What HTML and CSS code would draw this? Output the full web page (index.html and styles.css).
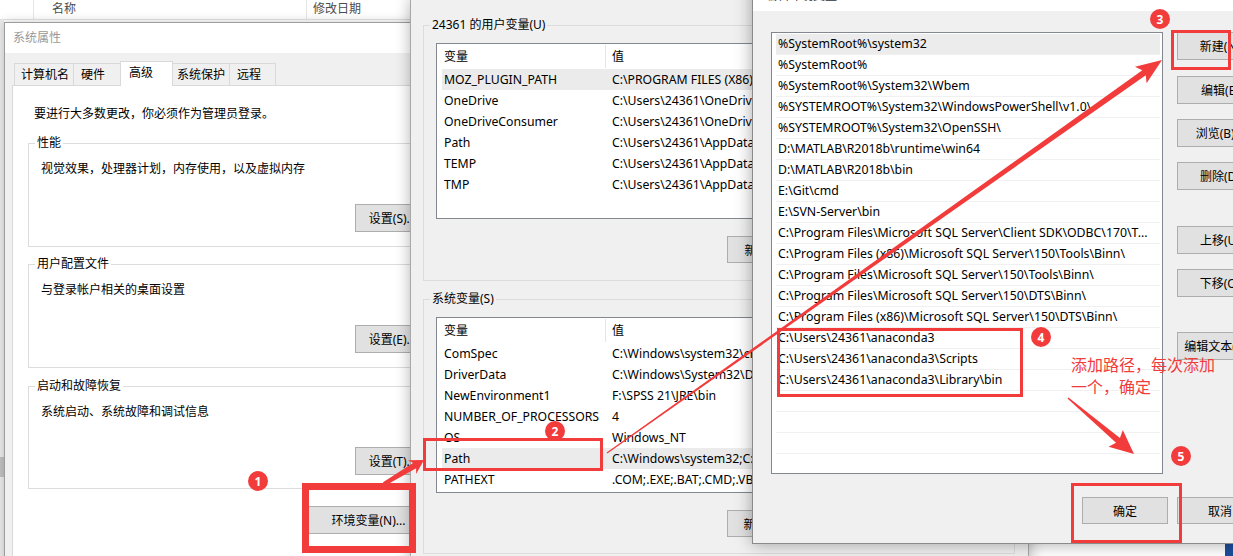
FILE: index.html
```html
<!DOCTYPE html>
<html>
<head>
  <meta charset="UTF-8">
  <title>编辑环境变量 - Path</title>
  <link rel="stylesheet" href="styles.css">
</head>
<body>
<div class="desktop">

  <div class="explorer">
    <div class="explorer-head">
      <span class="col-name">名称</span>
      <span class="col-date">修改日期</span>
    </div>
    <div class="explorer-body">
      <div class="explorer-side"><span class="side-thumb"></span></div>
    </div>
  </div>
  <div class="corner-blue"></div>

  <!-- 系统属性 -->
  <div class="win win-sys">
    <div class="titlebar">系统属性</div>
    <div class="sys-body">
      <div class="tabs">
        <span class="tab t1">计算机名</span>
        <span class="tab t2">硬件</span>
        <span class="tab t3 active">高级</span>
        <span class="tab t4">系统保护</span>
        <span class="tab t5">远程</span>
      </div>
      <div class="tab-panel">
        <p class="intro">要进行大多数更改，你必须作为管理员登录。</p>
        <div class="group">
          <span class="group-title">性能</span>
          <p class="group-text">视觉效果，处理器计划，内存使用，以及虚拟内存</p>
          <div class="group-actions"><button class="btn">设置(S)...</button></div>
        </div>
        <div class="group g2">
          <span class="group-title">用户配置文件</span>
          <p class="group-text">与登录帐户相关的桌面设置</p>
          <div class="group-actions"><button class="btn">设置(E)...</button></div>
        </div>
        <div class="group g3">
          <span class="group-title">启动和故障恢复</span>
          <p class="group-text">系统启动、系统故障和调试信息</p>
          <div class="group-actions"><button class="btn">设置(T)...</button></div>
        </div>
        <div class="panel-actions"><button class="btn btn-env">环境变量(N)...</button></div>
      </div>
    </div>
  </div>

  <!-- 环境变量 -->
  <div class="win win-env">
    <div class="env-group">
      <span class="group-title">24361 的用户变量(U)</span>
      <div class="listview">
        <div class="lv-head"><span class="lv-name">变量</span><span class="lv-value">值</span></div>
        <div class="lv-row selected"><span class="lv-name">MOZ_PLUGIN_PATH</span><span class="lv-value">C:\PROGRAM FILES (X86)\MOZILLA FIREFOX\plugins</span></div>
        <div class="lv-row"><span class="lv-name">OneDrive</span><span class="lv-value">C:\Users\24361\OneDrive</span></div>
        <div class="lv-row"><span class="lv-name">OneDriveConsumer</span><span class="lv-value">C:\Users\24361\OneDrive</span></div>
        <div class="lv-row"><span class="lv-name">Path</span><span class="lv-value">C:\Users\24361\AppData\Local\Microsoft\WindowsApps;</span></div>
        <div class="lv-row"><span class="lv-name">TEMP</span><span class="lv-value">C:\Users\24361\AppData\Local\Temp</span></div>
        <div class="lv-row"><span class="lv-name">TMP</span><span class="lv-value">C:\Users\24361\AppData\Local\Temp</span></div>
      </div>
      <div class="env-actions">
        <button class="btn btn-env-sm">新建(N)...</button>
        <button class="btn btn-env-sm">编辑(E)...</button>
        <button class="btn btn-env-sm">删除(D)</button>
      </div>
    </div>
    <div class="env-group sys">
      <span class="group-title">系统变量(S)</span>
      <div class="listview">
        <div class="lv-head"><span class="lv-name">变量</span><span class="lv-value">值</span></div>
        <div class="lv-row"><span class="lv-name">ComSpec</span><span class="lv-value">C:\Windows\system32\cmd.exe</span></div>
        <div class="lv-row"><span class="lv-name">DriverData</span><span class="lv-value">C:\Windows\System32\Drivers\DriverData</span></div>
        <div class="lv-row"><span class="lv-name">NewEnvironment1</span><span class="lv-value">F:\SPSS 21\JRE\bin</span></div>
        <div class="lv-row"><span class="lv-name">NUMBER_OF_PROCESSORS</span><span class="lv-value">4</span></div>
        <div class="lv-row"><span class="lv-name">OS</span><span class="lv-value">Windows_NT</span></div>
        <div class="lv-row selected"><span class="lv-name">Path</span><span class="lv-value">C:\Windows\system32;C:\Windows;C:\Windows\System32\Wbem</span></div>
        <div class="lv-row"><span class="lv-name">PATHEXT</span><span class="lv-value">.COM;.EXE;.BAT;.CMD;.VBS;.VBE;.JS;.JSE;.WSF;.WSH;.MSC</span></div>
      </div>
      <div class="env-actions">
        <button class="btn btn-env-sm">新建(W)...</button>
        <button class="btn btn-env-sm">编辑(I)...</button>
        <button class="btn btn-env-sm">删除(L)</button>
      </div>
    </div>
  </div>

  <!-- 编辑环境变量 -->
  <div class="win win-edit">
    <div class="titlebar edit-title">编辑环境变量</div>
    <div class="edit-body">
      <div class="edit-main">
        <div class="pathlist">
          <div class="path-row selected">%SystemRoot%\system32</div>
          <div class="path-row">%SystemRoot%</div>
          <div class="path-row">%SystemRoot%\System32\Wbem</div>
          <div class="path-row">%SYSTEMROOT%\System32\WindowsPowerShell\v1.0\</div>
          <div class="path-row">%SYSTEMROOT%\System32\OpenSSH\</div>
          <div class="path-row">D:\MATLAB\R2018b\runtime\win64</div>
          <div class="path-row">D:\MATLAB\R2018b\bin</div>
          <div class="path-row">E:\Git\cmd</div>
          <div class="path-row">E:\SVN-Server\bin</div>
          <div class="path-row">C:\Program Files\Microsoft SQL Server\Client SDK\ODBC\170\T...</div>
          <div class="path-row">C:\Program Files (x86)\Microsoft SQL Server\150\Tools\Binn\</div>
          <div class="path-row">C:\Program Files\Microsoft SQL Server\150\Tools\Binn\</div>
          <div class="path-row">C:\Program Files\Microsoft SQL Server\150\DTS\Binn\</div>
          <div class="path-row">C:\Program Files (x86)\Microsoft SQL Server\150\DTS\Binn\</div>
          <div class="path-row">C:\Users\24361\anaconda3</div>
          <div class="path-row">C:\Users\24361\anaconda3\Scripts</div>
          <div class="path-row">C:\Users\24361\anaconda3\Library\bin</div>
          <div class="path-row"></div>
          <div class="path-row"></div>
          <div class="path-row"></div>
          <div class="path-row"></div>
        </div>
        <div class="side-buttons">
          <button class="btn btn-side">新建(N)</button>
          <button class="btn btn-side">编辑(E)</button>
          <button class="btn btn-side">浏览(B)...</button>
          <button class="btn btn-side">删除(D)</button>
          <button class="btn btn-side gap-big">上移(U)</button>
          <button class="btn btn-side">下移(O)</button>
          <button class="btn btn-side gap-big2">编辑文本(T)...</button>
        </div>
      </div>
      <div class="edit-actions">
        <button class="btn btn-side">确定</button>
        <button class="btn btn-side">取消</button>
      </div>
    </div>
  </div>

  <!-- 标注 -->
  <svg class="marks" width="1233" height="556" viewBox="0 0 1233 556">
    <g fill="none" stroke="#f23c3c">
      <rect x="305.5" y="486.5" width="107" height="63" stroke-width="7"/>
      <rect x="424.5" y="439.5" width="177" height="30" stroke-width="3"/>
      <rect x="1172.5" y="31.5" width="57" height="37" stroke-width="3"/>
      <rect x="778.5" y="329.5" width="243" height="66" stroke-width="3"/>
      <rect x="1072.5" y="484.5" width="108" height="57" stroke-width="3"/>
    </g>
    <g fill="#f23c3c">
      <polygon points="385.03,485.72 416.11,468.23 416.12,474.06 424,460 407.88,460.34 413.03,463.09 382.97,482.28"/>
      <polygon points="607.35,453.49 1145.77,75.17 1146.56,83.19 1162,60 1135,66.87 1142.31,70.27 606.65,452.51"/>
      <polygon points="1067.48,398.61 1116.05,442.7 1108.58,446.86 1134,454 1122.82,430.08 1119.93,438.12 1068.52,397.39"/>
      <circle cx="258" cy="481" r="10"/>
      <circle cx="555" cy="431" r="10"/>
      <circle cx="1160" cy="19" r="10"/>
      <circle cx="1041" cy="337" r="10"/>
      <circle cx="1181" cy="456" r="10"/>
    </g>
    <g class="badge-num">
      <text x="258" y="485.5">1</text>
      <text x="555" y="435.5">2</text>
      <text x="1160" y="23.5">3</text>
      <text x="1041" y="341.5">4</text>
      <text x="1181" y="460.5">5</text>
    </g>
  </svg>
  <div class="note">添加路径，每次添加<br>一个，确定</div>

</div>
</body>
</html>
```

FILE: styles.css
```css
body {
  margin: 0;
  font-family: "Noto Sans", "Noto Sans CJK SC", sans-serif;
  font-size: 12px;
  color: #000;
  background: #fff;
  overflow: hidden;
}
p {
  margin: 0;
}
.desktop {
  position: relative;
  width: 1233px;
  height: 556px;
  overflow: hidden;
}

/* background explorer window */
.explorer {
  position: absolute;
  top: 0;
  left: 0;
  right: 0;
  bottom: 0;
  display: flex;
  flex-direction: column;
}
.explorer-head {
  display: flex;
  height: 20px;
  border-bottom: 1px solid #e5e5e5;
  color: #4c4c4c;
  line-height: 17px;
  box-sizing: border-box;
}
.col-name {
  margin-left: 33px;
  width: 273px;
  padding-left: 18px;
  border-left: 1px solid #e5e5e5;
  box-sizing: border-box;
}
.col-date {
  padding-left: 6px;
  border-left: 1px solid #e5e5e5;
}
.explorer-body {
  flex: 1;
  display: flex;
}
.explorer-side {
  width: 4px;
  background: #ececec;
  padding-top: 437px;
}
.side-thumb {
  display: block;
  height: 20px;
  background: #c2c2c2;
}
.corner-blue {
  position: absolute;
  left: 1225px;
  top: 543px;
  width: 8px;
  height: 13px;
  background: #1f4e9c;
}

/* shared window bits */
.win {
  position: absolute;
  box-sizing: border-box;
  background: #f0f0f0;
}
.titlebar {
  background: #fff;
  color: #999;
}
.btn {
  font-family: inherit;
  font-size: 12px;
  color: #000;
  background: #e1e1e1;
  border: 1px solid #adadad;
  padding: 0;
  margin: 0;
  box-sizing: border-box;
  white-space: nowrap;
}
.group-title {
  display: block;
  width: fit-content;
  margin: -9px 0 0 -6px;
  padding: 0 2px;
  line-height: 16px;
}

/* 系统属性 */
.win-sys {
  left: 4px;
  top: 22px;
  width: 456px;
  height: 560px;
  border: 1px solid #9c9c9c;
  box-shadow: 0 0 10px rgba(0, 0, 0, 0.2);
}
.win-sys .titlebar {
  height: 30px;
  line-height: 30px;
  padding-left: 8px;
}
.sys-body {
  padding: 8px 7px 0;
}
.tabs {
  display: flex;
  align-items: flex-end;
  height: 24px;
  margin-left: 2px;
}
.tab {
  height: 22px;
  line-height: 22px;
  padding-left: 6px;
  border: 1px solid #d9d9d9;
  border-bottom: none;
  margin-right: -1px;
  box-sizing: border-box;
  background: #f0f0f0;
}
.t1 { width: 60px; }
.t2 { width: 48px; padding-left: 7px; }
.t3 { width: 53px; padding-left: 8px; }
.t4 { width: 58px; padding-left: 4px; }
.t5 { width: 47px; padding-left: 7px; }
.tab.active {
  height: 25px;
  line-height: 22px;
  margin-bottom: -1px;
  background: #fff;
  position: relative;
  z-index: 1;
}
.tab-panel {
  background: #fff;
  border: 1px solid #d9d9d9;
  height: 480px;
  padding-top: 19px;
}
.intro {
  line-height: 17px;
  padding-left: 21px;
}
.group {
  margin: 21px 15px 0;
  height: 104px;
  border: 1px solid #dcdcdc;
  padding: 0 5px 0 12px;
  box-sizing: border-box;
}
.group .group-title {
  background: #fff;
}
.group.g2 {
  margin-top: 17px;
}
.group.g3 {
  margin-top: 18px;
  height: 103px;
}
.group-text {
  margin-top: 9px;
  line-height: 17px;
}
.group-actions {
  display: flex;
  justify-content: flex-end;
  margin-top: 27px;
}
.group-actions .btn {
  width: 75px;
  height: 28px;
}
.panel-actions {
  display: flex;
  justify-content: flex-end;
  margin: 17px 21px 0 0;
}
.btn-env {
  width: 123px;
  height: 28px;
}

/* 环境变量 */
.win-env {
  left: 410px;
  top: -1px;
  width: 619px;
  height: 570px;
  border: 1px solid #a8a8a8;
  padding: 25px 13px 0 12px;
  box-shadow: 0 0 14px rgba(0, 0, 0, 0.3);
  z-index: 2;
}
.env-group {
  border: 1px solid #dcdcdc;
  padding: 0 12px 17px;
}
.env-group.sys {
  margin-top: 18px;
  padding-bottom: 16px;
}
.env-group .group-title {
  background: #f0f0f0;
}
.listview {
  margin-top: 10px;
  height: 176px;
  border: 1px solid #828790;
  background: #fff;
  box-sizing: border-box;
  overflow: hidden;
}
.lv-head {
  display: flex;
  height: 25px;
  line-height: 25px;
}
.lv-head .lv-name {
  width: 169px;
  padding-left: 7px;
  box-sizing: border-box;
  border-right: 1px solid #e5e5e5;
  margin: 1px 0;
  line-height: 23px;
}
.lv-head .lv-value {
  padding-left: 6px;
}
.lv-row {
  display: flex;
  margin-left: 5px;
  height: 21px;
  line-height: 21px;
  font-size: 12.25px;
  white-space: nowrap;
}
.lv-row.selected {
  background: #ebebeb;
}
.lv-row .lv-name {
  width: 164px;
  flex: none;
  padding-left: 2px;
  box-sizing: border-box;
}
.lv-row .lv-value {
  padding-left: 6px;
}
.env-actions {
  display: flex;
  justify-content: flex-end;
  gap: 10px;
  margin-top: 17px;
}
.btn-env-sm {
  width: 85px;
  height: 27px;
}

/* 编辑环境变量 */
.win-edit {
  left: 752px;
  top: -31px;
  width: 530px;
  height: 575px;
  border: 1px solid #8a8a8a;
  box-shadow: 0 0 16px rgba(0, 0, 0, 0.35);
  z-index: 3;
}
.edit-title {
  height: 41px;
  padding: 18px 0 0 12px;
  line-height: 16px;
  color: #333;
  box-sizing: border-box;
}
.edit-body {
  padding: 21px 18px 0;
}
.edit-main {
  display: flex;
  gap: 14px;
}
.pathlist {
  width: 392px;
  height: 442px;
  border: 1px solid #828790;
  background: #fff;
  padding: 1px 2px 0 4px;
  box-sizing: border-box;
  overflow: hidden;
}
.path-row {
  height: 21px;
  line-height: 20px;
  font-size: 12.3px;
  padding-left: 2px;
  border-bottom: 1px solid #f0f0f0;
  box-sizing: border-box;
  white-space: nowrap;
  overflow: hidden;
}
.path-row.selected {
  background: #ececec;
}
.side-buttons {
  display: flex;
  flex-direction: column;
}
.btn-side {
  width: 86px;
  height: 28px;
}
.side-buttons .btn-side + .btn-side {
  margin-top: 15px;
}
.side-buttons .btn-side:nth-child(2) {
  margin-top: 16px;
}
.side-buttons .btn-side.gap-big {
  margin-top: 36px;
}
.side-buttons .btn-side.gap-big2 {
  margin-top: 35px;
}
.edit-actions {
  display: flex;
  justify-content: flex-end;
  gap: 9px;
  margin-top: 23px;
}
.edit-actions .btn-side {
  height: 27px;
}

/* annotations */
.marks {
  position: absolute;
  left: 0;
  top: 0;
  z-index: 10;
}
.badge-num text {
  fill: #fff;
  font-family: "Noto Sans", sans-serif;
  font-size: 12px;
  font-weight: bold;
  text-anchor: middle;
}
.note {
  position: absolute;
  left: 1071px;
  top: 353px;
  z-index: 10;
  color: #f23c3c;
  font-family: "Noto Sans CJK SC", sans-serif;
  font-size: 16px;
  line-height: 22px;
}
```
